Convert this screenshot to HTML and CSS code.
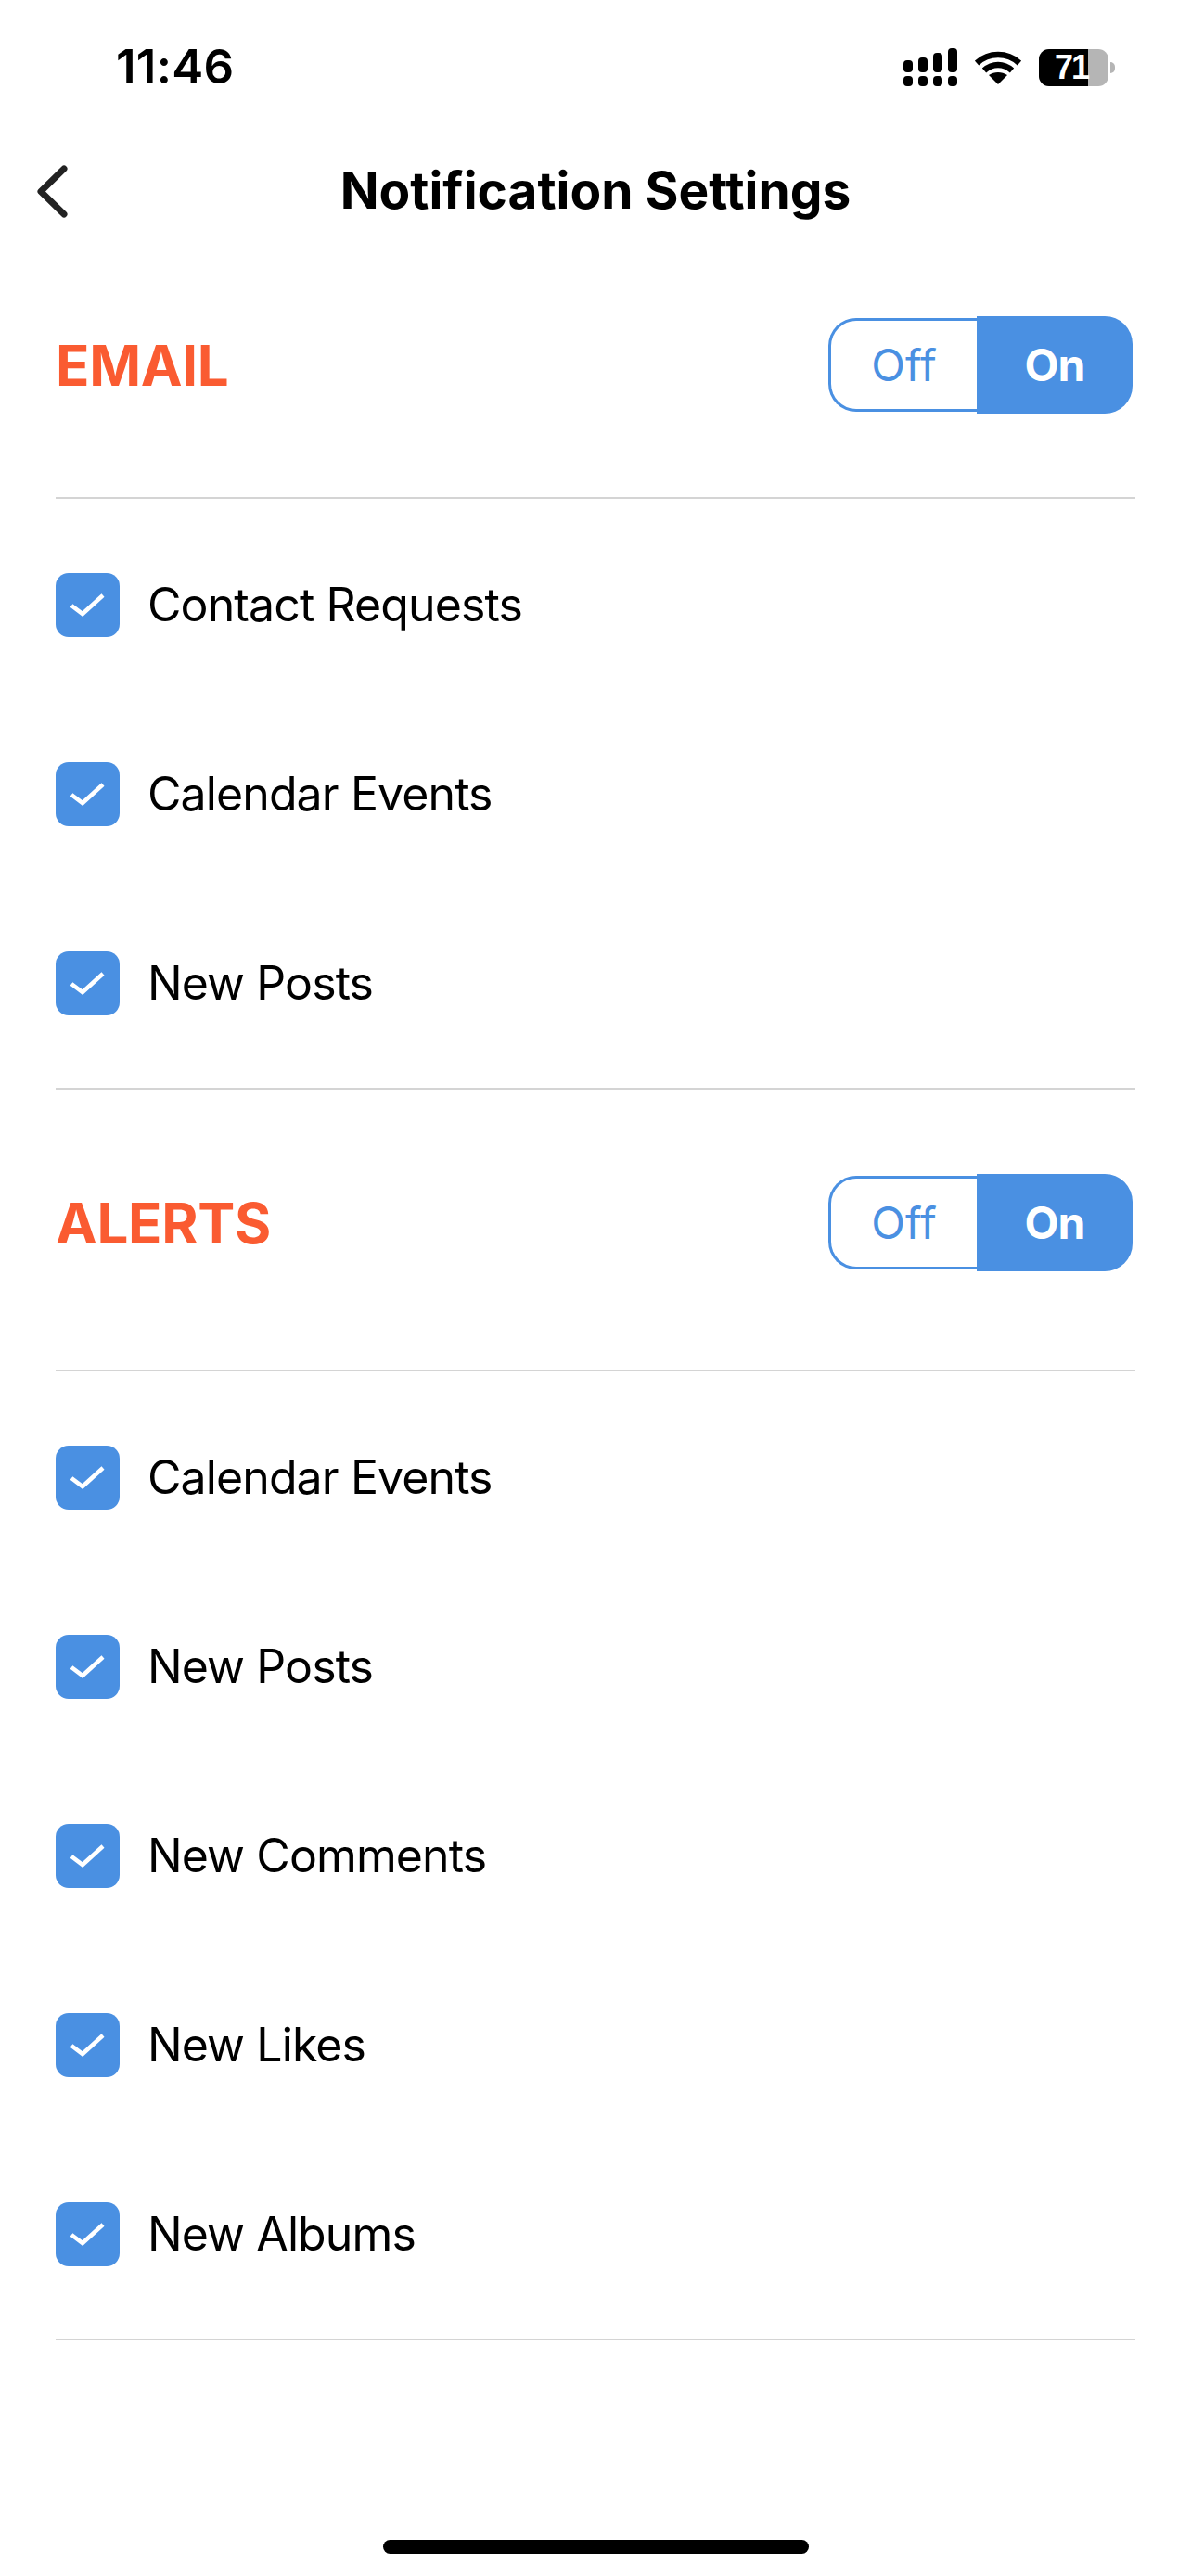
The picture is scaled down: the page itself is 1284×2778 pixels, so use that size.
FILE: index.html
```html
<!DOCTYPE html>
<html lang="en">
<head>
    <meta charset="UTF-8">
    <meta name="viewport" content="width=device-width, initial-scale=1.0">
    <title>Notification Settings</title>
    <link rel="stylesheet" href="styles.css">
</head>
<body>
    <div class="statusBar">
        <span class="clock">11:46</span>
        <div class="statusIcons">
            <svg class="signal" width="58" height="41" viewBox="0 0 58 41" fill="#000">
                <rect x="0" y="13" width="10" height="13" rx="4"/>
                <rect x="16" y="10" width="10" height="16" rx="4"/>
                <rect x="32" y="5" width="10" height="21" rx="4"/>
                <rect x="48" y="0" width="10" height="26" rx="4"/>
                <rect x="0" y="30" width="10" height="11" rx="4"/>
                <rect x="16" y="30" width="10" height="11" rx="4"/>
                <rect x="32" y="30" width="10" height="11" rx="4"/>
                <rect x="48" y="30" width="10" height="11" rx="4"/>
            </svg>
            <svg class="wifi" width="50" height="36" viewBox="0 0 50 36" fill="none" stroke="#000" stroke-width="6.5">
                <path d="M2 13 C15 1 35 1 48 13"/>
                <path d="M10 21 C19 13 31 13 40 21"/>
                <path d="M15 26 L25 36 L35 26 C29 22 21 22 15 26 Z" fill="#000" stroke="none"/>
            </svg>
            <div class="battery">
                <div class="batteryBody">
                    <div class="batteryFill"></div>
                    <span class="batteryText">71</span>
                </div>
                <div class="batteryCap"></div>
            </div>
        </div>
    </div>

    <div class="navBar">
        <svg class="backIcon" width="40" height="62" viewBox="0 0 40 62" fill="none" stroke="#222" stroke-width="7" stroke-linecap="round" stroke-linejoin="round">
            <path d="M33 7 L8 31.5 L33 56"/>
        </svg>
        <h1 class="navTitle">Notification Settings</h1>
    </div>

    <section class="group groupEmail">
        <div class="groupHead">
            <h2 class="groupTitle">EMAIL</h2>
            <div class="toggle">
                <span class="toggleOff">Off</span>
                <span class="toggleOn">On</span>
            </div>
        </div>
        <ul class="checkList">
            <li class="checkRow"><span class="checkBox"><svg width="40" height="28" viewBox="0 0 40 28" fill="none" stroke="#fff" stroke-width="4.5"><path d="M2 15 L14 24 L36 4"/></svg></span>Contact Requests</li>
            <li class="checkRow"><span class="checkBox"><svg width="40" height="28" viewBox="0 0 40 28" fill="none" stroke="#fff" stroke-width="4.5"><path d="M2 15 L14 24 L36 4"/></svg></span>Calendar Events</li>
            <li class="checkRow"><span class="checkBox"><svg width="40" height="28" viewBox="0 0 40 28" fill="none" stroke="#fff" stroke-width="4.5"><path d="M2 15 L14 24 L36 4"/></svg></span>New Posts</li>
        </ul>
    </section>

    <section class="group groupAlerts">
        <div class="groupHead">
            <h2 class="groupTitle">ALERTS</h2>
            <div class="toggle">
                <span class="toggleOff">Off</span>
                <span class="toggleOn">On</span>
            </div>
        </div>
        <ul class="checkList">
            <li class="checkRow"><span class="checkBox"><svg width="40" height="28" viewBox="0 0 40 28" fill="none" stroke="#fff" stroke-width="4.5"><path d="M2 15 L14 24 L36 4"/></svg></span>Calendar Events</li>
            <li class="checkRow"><span class="checkBox"><svg width="40" height="28" viewBox="0 0 40 28" fill="none" stroke="#fff" stroke-width="4.5"><path d="M2 15 L14 24 L36 4"/></svg></span>New Posts</li>
            <li class="checkRow"><span class="checkBox"><svg width="40" height="28" viewBox="0 0 40 28" fill="none" stroke="#fff" stroke-width="4.5"><path d="M2 15 L14 24 L36 4"/></svg></span>New Comments</li>
            <li class="checkRow"><span class="checkBox"><svg width="40" height="28" viewBox="0 0 40 28" fill="none" stroke="#fff" stroke-width="4.5"><path d="M2 15 L14 24 L36 4"/></svg></span>New Likes</li>
            <li class="checkRow"><span class="checkBox"><svg width="40" height="28" viewBox="0 0 40 28" fill="none" stroke="#fff" stroke-width="4.5"><path d="M2 15 L14 24 L36 4"/></svg></span>New Albums</li>
        </ul>
    </section>

    <div class="homeBar"></div>
</body>
</html>
```

FILE: styles.css
```css
body {
    font-family: Inter, "Liberation Sans", sans-serif;
    margin: 0;
    width: 1284px;
    height: 2778px;
    background-color: #fff;
    color: #000;
    position: relative;
    overflow: hidden;
}

/* Status Bar */
.statusBar {
    height: 146px;
    box-sizing: border-box;
    padding: 52px 82px 0 125px;
    display: flex;
    justify-content: space-between;
    align-items: flex-start;
}

.clock {
    font-size: 51px;
    line-height: 40px;
    font-weight: 600;
    letter-spacing: 0.3px;
}

.statusIcons {
    display: flex;
    align-items: center;
    gap: 19px;
}

.battery {
    display: flex;
    align-items: center;
}

.batteryBody {
    width: 75px;
    height: 40px;
    border-radius: 11px;
    background-color: #b5b5b5;
    position: relative;
}

.batteryFill {
    width: 53px;
    height: 100%;
    background-color: #000;
    border-radius: 11px 0 0 11px;
}

.batteryText {
    position: absolute;
    left: 17px;
    top: 0;
    font-family: "Liberation Sans", sans-serif;
    font-size: 36px;
    line-height: 40px;
    font-weight: 700;
    letter-spacing: -2px;
    color: #fff;
}

.batteryCap {
    width: 5px;
    height: 12px;
    margin-left: 2px;
    background-color: #b5b5b5;
    border-radius: 0 6px 6px 0;
}

/* Nav Bar */
.navBar {
    height: 118px;
    padding-bottom: 2px;
    position: relative;
    display: flex;
    align-items: center;
    justify-content: center;
}

.backIcon {
    position: absolute;
    left: 36px;
    top: 29px;
}

.navTitle {
    margin: 0;
    font-size: 55px;
    line-height: 1;
    font-weight: 700;
}

/* Groups */
.group {
    padding: 0 60px;
}

.groupHead {
    display: flex;
    justify-content: space-between;
    align-items: center;
    border-bottom: 2px solid #d4d4d4;
    padding-right: 3px;
}

.groupEmail .groupHead {
    padding-top: 75px;
    padding-bottom: 90px;
}

.groupAlerts .groupHead {
    padding-top: 91px;
    padding-bottom: 106px;
}

.groupTitle {
    margin: 0;
    font-size: 60px;
    line-height: 1;
    font-weight: 700;
    letter-spacing: -0.3px;
    color: #fa5b31;
}

/* Off / On Toggle */
.toggle {
    display: flex;
    width: 328px;
    height: 105px;
    font-size: 48px;
}

.toggleOff, .toggleOn {
    display: flex;
    align-items: center;
    justify-content: center;
    box-sizing: border-box;
}

.toggleOff {
    width: 160px;
    margin: 2px 0;
    color: #4a90e2;
    border: 3px solid #4a90e2;
    border-right: none;
    border-radius: 30px 0 0 30px;
}

.toggleOn {
    width: 168px;
    background-color: #4a90e2;
    color: #fff;
    font-weight: 700;
    letter-spacing: -1px;
    border-radius: 0 30px 30px 0;
}

/* Checkbox Rows */
.checkList {
    list-style: none;
    margin: 0;
    padding: 12px 0 11px;
    border-bottom: 2px solid #d4d4d4;
}

.checkRow {
    height: 204px;
    display: flex;
    align-items: center;
    gap: 30px;
    font-size: 50px;
    letter-spacing: -0.9px;
}

.checkBox {
    width: 69px;
    height: 69px;
    border-radius: 14px;
    background-color: #4a90e2;
    display: flex;
    align-items: center;
    justify-content: center;
}

/* Home Indicator */
.homeBar {
    position: absolute;
    left: 413px;
    bottom: 24px;
    width: 459px;
    height: 15px;
    border-radius: 8px;
    background-color: #000;
}
```
